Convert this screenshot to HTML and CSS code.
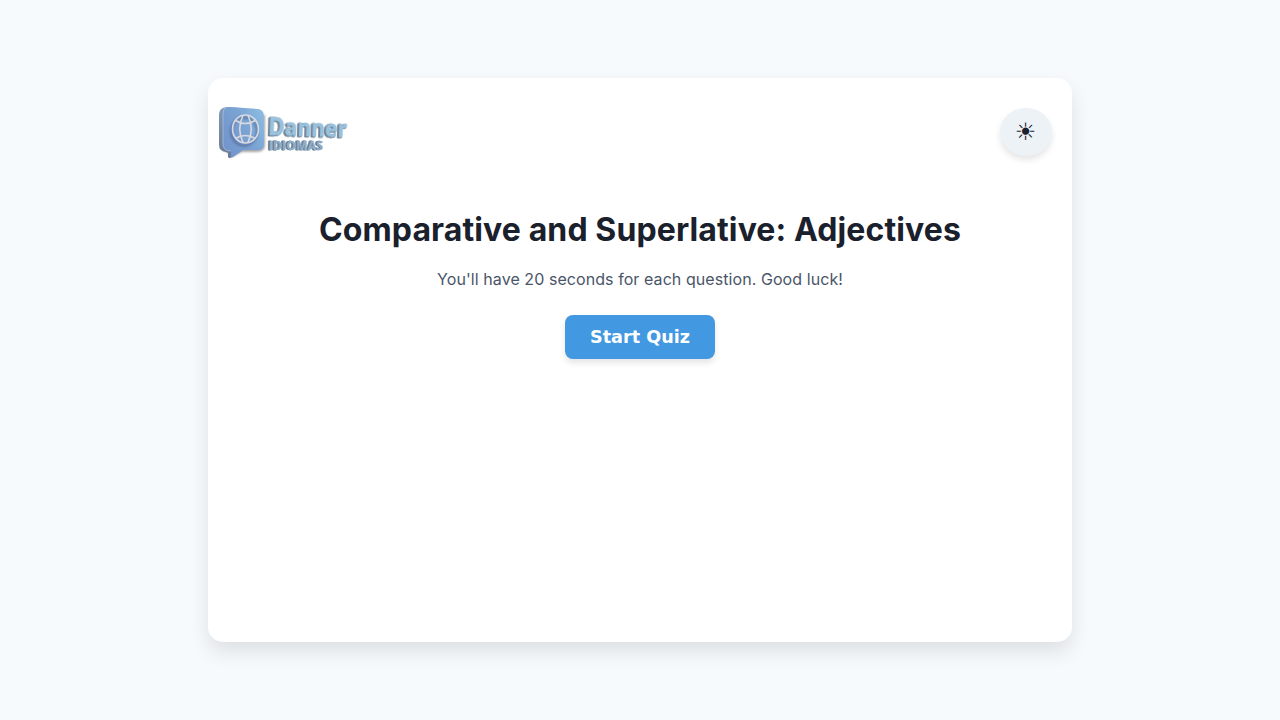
FILE: index.html
```html
<!DOCTYPE html>
<html lang="en">
<head>
<meta charset="utf-8">
<title>Comparative and Superlative: Adjectives</title>
<link rel="stylesheet" href="styles.css">
</head>
<body>
<main class="card">
  <header class="bar">
    <svg class="logo" width="150" height="75" viewBox="0 0 150 75" role="img" aria-label="Danner Idiomas">
      <defs>
        <linearGradient id="face" x1="0" y1="0.7" x2="1" y2="0.1"><stop offset="0" stop-color="#7395cc"/><stop offset="0.55" stop-color="#7ba4d4"/><stop offset="1" stop-color="#8dbde2"/></linearGradient>
        <linearGradient id="side" x1="0" y1="0" x2="0" y2="1"><stop offset="0" stop-color="#8199b5"/><stop offset="1" stop-color="#6b7a94"/></linearGradient>
        <filter id="soft" x="-20%" y="-20%" width="140%" height="140%"><feGaussianBlur stdDeviation="1.2"/></filter>
      </defs>
      <path d="M13 20V52q1 5 7 5l2 6 12-6h15q8 0 8-7V20z" fill="#000" opacity=".35" filter="url(#soft)"/>
      <path d="M18 12q-7 1-7 8v30q0 6 7 7l2 1v4q1 2 4 0l9-6V13z" fill="url(#side)"/>
      <path d="M21 12l29 2q6 1 6 7v28q0 6-6 6H35l-10 7q-2 1-2-1v-5q-8 0-8-7V18q0-6 6-6z" fill="url(#face)"/>
      <path d="M23 56q-8 0-8-7V18q0-5 4-6" fill="none" stroke="#a9c7e5" stroke-width=".7"/>
      <ellipse cx="36" cy="36.500" rx="13" ry="14" fill="none" stroke="#3f5580" stroke-width="2.5" opacity=".5" filter="url(#soft)"/>
      <g fill="none" stroke="#d9d9df" stroke-width="1.600">
        <ellipse cx="37.500" cy="34" rx="13" ry="14"/>
        <path d="M35 20.500q-6.500 13 0 27M40 20.500q6.500 13 0 27M27.500 25.500q9.500 6 20 0M27.500 43.500q9.500-6 20 0"/>
      </g>
      <text class="name" x="60" y="40" textLength="79" lengthAdjust="spacingAndGlyphs" transform="rotate(1.6 60 39)"><tspan class="cap">D</tspan>anner</text>
      <text class="sub" x="61" y="54.500" textLength="54" lengthAdjust="spacing">IDIOMAS</text>
    </svg>
    <button class="theme" aria-label="Toggle theme">☀</button>
  </header>
  <section class="intro">
    <h1 class="title">Comparative and Superlative: Adjectives</h1>
    <p class="note">You'll have 20 seconds for each question. Good luck!</p>
    <button class="start">Start Quiz</button>
  </section>
</main>
</body>
</html>
```
FILE: styles.css
```css
* { box-sizing: border-box; }
body {
  margin: 0;
  height: 100vh;
  display: flex;
  align-items: center;
  justify-content: center;
  background: #f6fafd;
  color: #1a202c;
  font-family: Inter, sans-serif;
}
.card {
  width: 864px;
  height: 564px;
  border-radius: 15px;
  background: #fff;
  box-shadow: 0 10px 20px rgba(0, 0, 0, 0.1);
}
.bar {
  display: flex;
  justify-content: space-between;
  align-items: flex-start;
  padding: 17px 20px 0 0;
}
.logo { display: block; }
.name {
  font: 700 23px "Open Sans", sans-serif;
  fill: #98c2de;
  stroke: #98c2de;
  stroke-width: 0.5px;
}
.cap { font-size: 25px; }
.sub {
  font: 700 12px "Open Sans", sans-serif;
  fill: #8fb0cc;
  stroke: #8fb0cc;
  stroke-width: 0.3px;
}
.name {
  filter: drop-shadow(-0.800px 0.800px 0 #738294) drop-shadow(-1px 1px 0 #738294);
}
.sub {
  filter: drop-shadow(-0.700px 0.400px 0 #738294) drop-shadow(-0.800px 0.500px 0 #738294);
}
.theme {
  width: 52px;
  height: 48px;
  margin-top: 13px;
  padding: 0 1px 0 0;
  border: 0;
  border-radius: 50%;
  background: #edf2f7;
  color: #1a202c;
  font: 24px "DejaVu Sans", sans-serif;
  box-shadow: 0 4px 6px rgba(0, 0, 0, 0.1);
}
.intro {
  display: flex;
  flex-direction: column;
  align-items: center;
  padding-top: 38px;
}
.title {
  margin: 0;
  font-size: 32px;
  line-height: 44px;
  font-weight: 700;
  letter-spacing: 0.110px;
  white-space: nowrap;
}
.note {
  margin: 14px 0 0;
  font-size: 16px;
  line-height: 27px;
  letter-spacing: 0.070px;
  color: #4a5568;
}
.start {
  width: 150px;
  height: 44px;
  margin-top: 22px;
  padding: 0;
  border: 0;
  border-radius: 8px;
  background: #4299e1;
  color: #fff;
  font: 700 17.600px "DejaVu Sans", sans-serif;
  box-shadow: 0 4px 6px rgba(0, 0, 0, 0.1);
}
```
